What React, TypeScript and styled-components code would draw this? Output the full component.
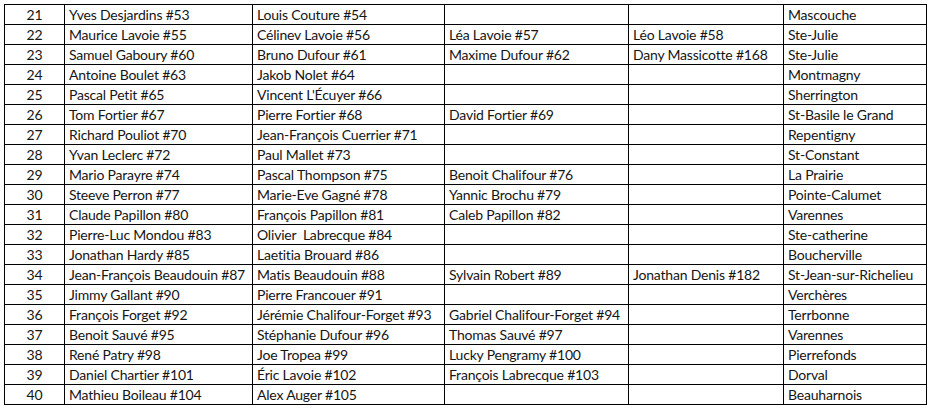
import React from "react";
import styled, { createGlobalStyle } from "styled-components";

const Global = createGlobalStyle`
  html, body { margin: 0; padding: 0; background: #ffffff; }
  body { font-family: Lato, "Liberation Sans", sans-serif; }
`;

const Page = styled.div`
  padding: 4px 0 0 4px;
`;

const Table = styled.table`
  border-collapse: collapse;
  table-layout: fixed;
  width: 922px;
  font-family: Lato, "Liberation Sans", sans-serif;
  font-size: 14px;
  letter-spacing: -0.2px;
  color: #151515;
`;

const Row = styled.tr`
  height: 20px;
`;

const Cell = styled.td<{ $center?: boolean }>`
  border: 1px solid #000;
  padding: ${(p) => (p.$center ? "0" : "0 0 0 4px")};
  height: 19px;
  line-height: 19px;
  white-space: pre;
  overflow: hidden;
  text-align: ${(p) => (p.$center ? "center" : "left")};
`;

const widths = [60, 188, 192, 184, 155, 143];

type Entry = [number, string, string, string, string, string];

const rows: Entry[] = [
  [21, "Yves Desjardins #53", "Louis Couture #54", "", "", "Mascouche"],
  [22, "Maurice Lavoie #55", "Célinev Lavoie #56", "Léa Lavoie #57", "Léo Lavoie #58", "Ste-Julie"],
  [23, "Samuel Gaboury #60", "Bruno Dufour #61", "Maxime Dufour #62", "Dany Massicotte #168", "Ste-Julie"],
  [24, "Antoine Boulet #63", "Jakob Nolet #64", "", "", "Montmagny"],
  [25, "Pascal Petit #65", "Vincent L'Écuyer #66", "", "", "Sherrington"],
  [26, "Tom Fortier #67", "Pierre Fortier #68", "David Fortier #69", "", "St-Basile le Grand"],
  [27, "Richard Pouliot #70", "Jean-François Cuerrier #71", "", "", "Repentigny"],
  [28, "Yvan Leclerc #72", "Paul Mallet #73", "", "", "St-Constant"],
  [29, "Mario Parayre #74", "Pascal Thompson #75", "Benoit Chalifour #76", "", "La Prairie"],
  [30, "Steeve Perron #77", "Marie-Eve Gagné #78", "Yannic Brochu #79", "", "Pointe-Calumet"],
  [31, "Claude Papillon #80", "François Papillon #81", "Caleb Papillon #82", "", "Varennes"],
  [32, "Pierre-Luc Mondou #83", "Olivier  Labrecque #84", "", "", "Ste-catherine"],
  [33, "Jonathan Hardy #85", "Laetitia Brouard #86", "", "", "Boucherville"],
  [34, "Jean-François Beaudouin #87", "Matis Beaudouin #88", "Sylvain Robert #89", "Jonathan Denis #182", "St-Jean-sur-Richelieu"],
  [35, "Jimmy Gallant #90", "Pierre Francouer #91", "", "", "Verchères"],
  [36, "François Forget #92", "Jérémie Chalifour-Forget #93", "Gabriel Chalifour-Forget #94", "", "Terrbonne"],
  [37, "Benoit Sauvé #95", "Stéphanie Dufour #96", "Thomas Sauvé #97", "", "Varennes"],
  [38, "René Patry #98", "Joe Tropea #99", "Lucky Pengramy #100", "", "Pierrefonds"],
  [39, "Daniel Chartier #101", "Éric Lavoie #102", "François Labrecque #103", "", "Dorval"],
  [40, "Mathieu Boileau #104", "Alex Auger #105", "", "", "Beauharnois"],
];

export default function App() {
  return (
    <Page>
      <Global />
      <Table>
        <colgroup>
          {widths.map((w, i) => (
            <col key={i} style={{ width: w }} />
          ))}
        </colgroup>
        <tbody>
          {rows.map((r) => (
            <Row key={r[0]}>
              <Cell $center>{r[0]}</Cell>
              <Cell>{r[1]}</Cell>
              <Cell>{r[2]}</Cell>
              <Cell>{r[3]}</Cell>
              <Cell>{r[4]}</Cell>
              <Cell>{r[5]}</Cell>
            </Row>
          ))}
        </tbody>
      </Table>
    </Page>
  );
}
